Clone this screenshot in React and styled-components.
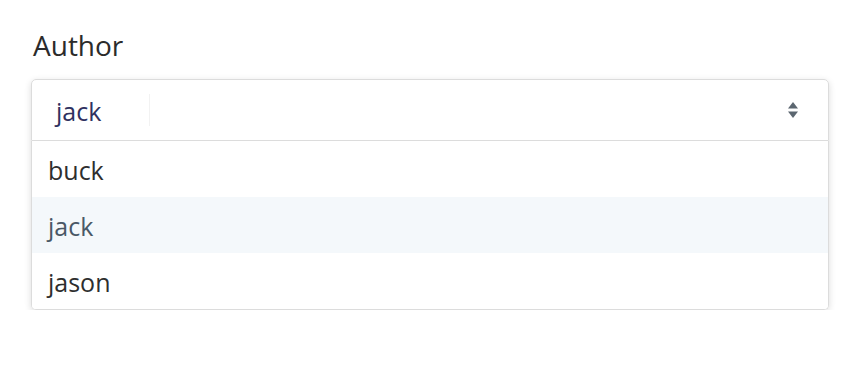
import React from 'react';
import styled, { createGlobalStyle } from 'styled-components';

const GlobalStyle = createGlobalStyle`
  body {
    margin: 0;
    background: #ffffff;
    font-family: "Open Sans", "Liberation Sans", sans-serif;
  }
`;

const Page = styled.div`
  padding: 26px 0 0 31px;
`;

const Field = styled.div`
  width: 798px;
  display: flex;
  flex-direction: column;
`;

const Label = styled.label`
  font-size: 28px;
  line-height: 38px;
  color: #2b2b2b;
  padding-left: 2px;
  margin-bottom: 15px;
`;

const SelectWrap = styled.div`
  display: flex;
  flex-direction: column;
  border-radius: 5px;
  box-shadow: 0 2px 7px rgba(0, 0, 0, 0.14);
`;

const Control = styled.div`
  height: 60px;
  display: flex;
  align-items: center;
  justify-content: space-between;
  border: 1px solid #dcdcdc;
  border-radius: 5px 5px 0 0;
  padding: 0 29px 0 24px;
  background: #ffffff;
`;

const Value = styled.span`
  font-size: 25px;
  color: #2f3160;
  padding-top: 2px;
  padding-right: 48px;
  line-height: 30px;
  border-right: 1px solid #f2f2f2;
`;

const Arrows = styled.svg`
  flex: none;
  width: 12px;
  height: 22px;
`;

const Menu = styled.ul`
  list-style: none;
  margin: 0;
  padding: 0;
  border: 1px solid #dcdcdc;
  border-top: none;
  border-radius: 0 0 5px 5px;
  background: #ffffff;
  overflow: hidden;
`;

const Option = styled.li`
  height: 56px;
  display: flex;
  align-items: center;
  padding: 2px 0 0 16px;
  box-sizing: border-box;
  font-size: 25px;
  color: ${p => (p.$active ? '#4a5866' : '#2e2e2e')};
  background: ${p => (p.$active ? '#f4f8fb' : '#ffffff')};
`;

const options = ['buck', 'jack', 'jason'];

const App = () => (
  <>
    <GlobalStyle />
    <Page>
      <Field>
        <Label>Author</Label>
        <SelectWrap>
          <Control>
            <Value>jack</Value>
            <Arrows viewBox="0 0 12 22">
              <path d="M6 3 L11 9.5 H1 Z" fill="#5b6670" />
              <path d="M6 19 L11 12.5 H1 Z" fill="#5b6670" />
            </Arrows>
          </Control>
          <Menu>
            {options.map(name => (
              <Option key={name} $active={name === 'jack'}>
                {name}
              </Option>
            ))}
          </Menu>
        </SelectWrap>
      </Field>
    </Page>
  </>
);

export default App;
